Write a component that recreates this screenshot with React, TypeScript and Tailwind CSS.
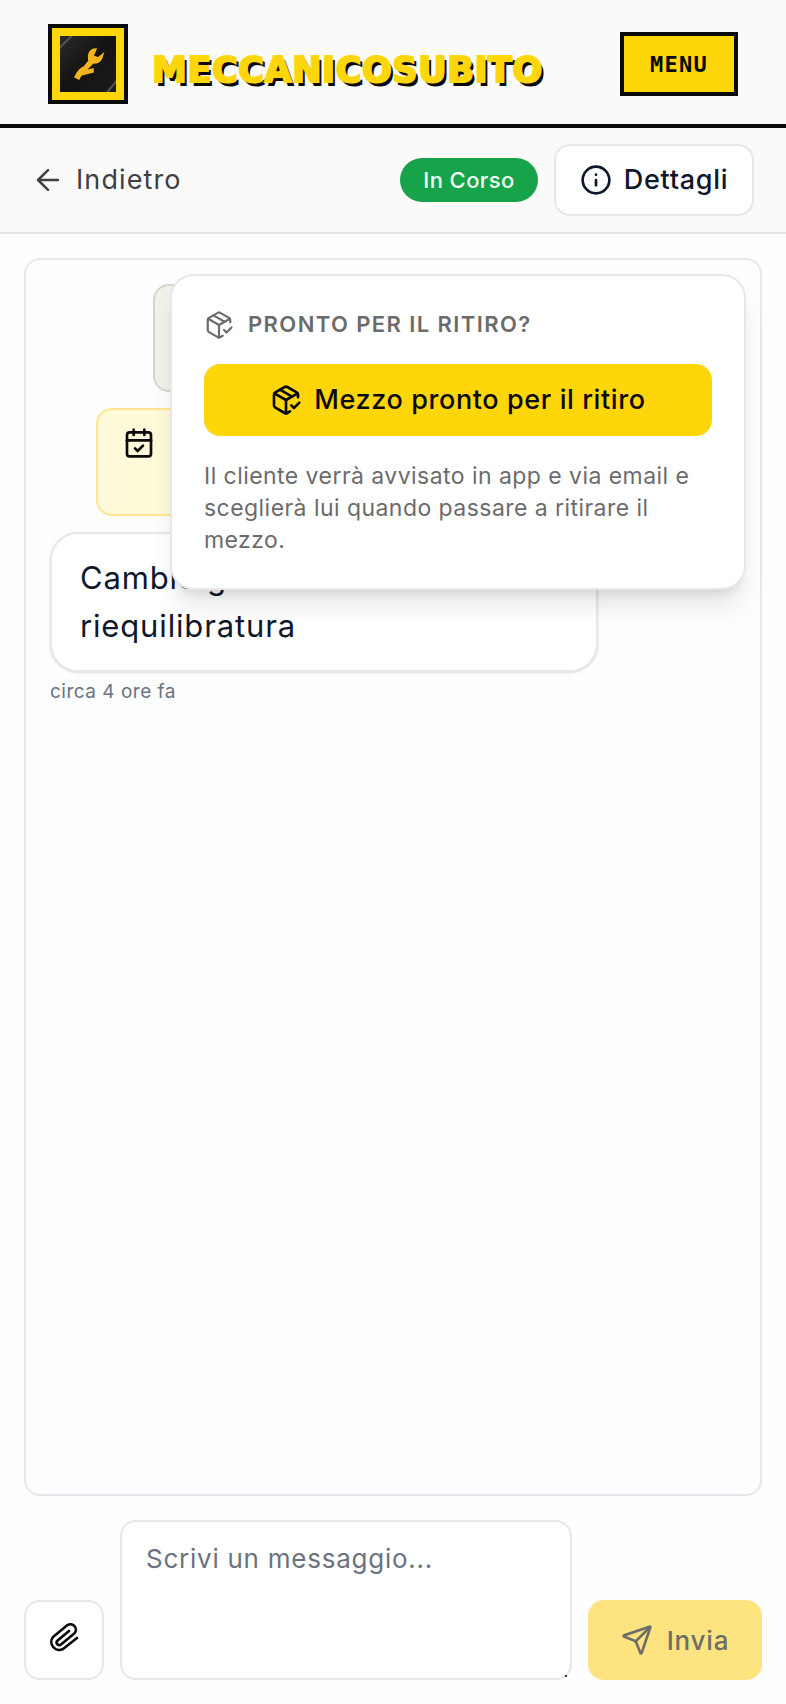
import { ArrowLeft, CalendarCheck, Info, PackageCheck, Send } from "lucide-react";

const Logo = () => {
    return (
        <div className="w-20 h-20 shrink-0 border-4 border-[#0a0a0a] bg-[#ffd60a] p-2">
            <svg viewBox="0 0 56 56" className="block w-14 h-14">
                <defs>
                    <linearGradient id="logoBg" x1="0" y1="0" x2="1" y2="1">
                        <stop offset="0" stopColor="#2b2a28" />
                        <stop offset="0.5" stopColor="#141312" />
                        <stop offset="1" stopColor="#1d1c1a" />
                    </linearGradient>
                </defs>
                <rect width="56" height="56" fill="url(#logoBg)" />
                <path d="M0 10 L10 0 L13 0 L0 13 Z" fill="#55534f" />
                <path d="M46 56 L56 44 L56 47 L49 56 Z" fill="#55534f" />
                <path
                    d="M33 20 L36 13 C33 13 30 15 29 18 C28 21 29 23 29 25 L24 31 C21 32 18 35 15 41 L19 43 L21 39 L33 36 L33 33 L25 35 L33 27 C37 27 41 25 42 21 L43 18 L38 22 Z"
                    fill="#f4b41a"
                    stroke="#f4b41a"
                    strokeWidth="1.5"
                />
            </svg>
        </div>
    );
};

// graffetta: quella di lucide qui viene troppo tonda
const Clip = () => {
    return (
        <svg viewBox="22 22 36 36" className="w-9 h-9" fill="none" stroke="currentColor" strokeWidth="2.6" strokeLinecap="round" strokeLinejoin="round">
            <path d="M53 38 L39 49 A8 8 0 0 1 29 37 L43.5 25 A5.5 5.5 0 0 1 50.5 33.3 L37 44.5 A2.6 2.6 0 0 1 33.6 40.5 L45 31" />
        </svg>
    );
};

export default function App() {
    return (
        <div className="flex flex-col h-[1704px] w-[786px] bg-white text-[#0f172a] font-['Inter','Noto_Sans',sans-serif]">
            <header className="h-[128px] shrink-0 flex items-center justify-between pt-1 pl-12 pr-12 bg-[#fafaf9] border-b-4 border-[#0a0a0a]">
                <div className="flex items-center gap-6">
                    <Logo />
                    <span className="mt-3 font-['DejaVu_Sans',sans-serif] font-bold text-[35px] leading-none tracking-[0.6px] text-[#ffd60a] [-webkit-text-stroke:2px_#ffd60a] [text-shadow:3px_4px_0_#0a0a0a]">
                        MECCANICOSUBITO
                    </span>
                </div>
                <button className="w-[118px] h-16 border-4 border-[#0a0a0a] bg-[#ffd60a] font-['DejaVu_Sans_Mono',monospace] font-bold text-[22px] tracking-[1.2px] text-[#0a0a0a]">
                    MENU
                </button>
            </header>

            <div className="h-[106px] shrink-0 flex items-center justify-between pl-[31px] pr-8 bg-[#fafaf9] border-b-2 border-[#e5e5e5]">
                <div className="flex items-center gap-[11px] text-[27px] tracking-[1.1px] text-[#3f3f46]">
                    <ArrowLeft size={34} strokeWidth={1.75} />
                    <span>Indietro</span>
                </div>
                <div className="flex items-center gap-4">
                    <span className="h-11 w-[138px] rounded-full bg-[#16a34a] flex items-center justify-center text-[22px] font-medium tracking-[0.4px] text-[#f0fdf4]">
                        In Corso
                    </span>
                    <button className="h-[72px] w-[200px] rounded-2xl border-2 border-[#e5e7eb] bg-white flex items-center justify-center gap-3 text-[27px] font-medium tracking-[0.7px]">
                        <Info size={32} strokeWidth={2} />
                        Dettagli
                    </button>
                </div>
            </div>

            <main className="flex-1 flex flex-col min-h-0 px-6 pt-6 pb-6 bg-[#fefefe]">
                <div className="relative flex-1 min-h-0 rounded-2xl border-2 border-[#e5e7eb] bg-[#fcfdfe] p-6">
                    <div className="flex flex-col items-center gap-4">
                        <div className="w-[480px] h-[108px] rounded-2xl border-2 border-[#d6d6d0] bg-[#f1f1ec]" />
                        <div className="w-[594px] h-[108px] rounded-2xl border-2 border-[#fde68a] bg-[#fef9d9] pt-[17px] pl-[25px]">
                            <CalendarCheck size={32} strokeWidth={2} className="text-[#0a0a0a]" />
                        </div>
                    </div>
                    <div className="mt-4 w-[548px] rounded-[28px] border-2 border-[#e5e7eb] bg-white px-7 py-5 text-[31px] leading-[48px] tracking-[0.85px] shadow-sm">
                        Cambio gomme e
                        <br />
                        riequilibratura
                    </div>
                    <p className="mt-1.5 text-[19px] tracking-[0.5px] text-[#6b7280]">circa 4 ore fa</p>

                    {/* popover sopra la chat */}
                    <div className="absolute left-[144px] top-[14px] w-[576px] h-[316px] rounded-3xl border-2 border-[#e5e7eb] bg-white px-8 pt-8 shadow-xl">
                        <div className="flex items-center gap-[14px] text-[#6b6b6b]">
                            <PackageCheck size={30} strokeWidth={1.75} />
                            <span className="text-[22px] font-semibold tracking-[1.4px]">PRONTO PER IL RITIRO?</span>
                        </div>
                        <button className="mt-[23px] w-full h-[72px] rounded-2xl bg-[#ffd60a] flex items-center justify-center gap-3 text-[27px] font-medium tracking-[0.6px] text-[#0a0a0a]">
                            <PackageCheck size={32} strokeWidth={2} />
                            Mezzo pronto per il ritiro
                        </button>
                        <p className="mt-6 text-[23px] leading-8 tracking-[0.45px] text-[#6b6b6b]">
                            Il cliente verrà avvisato in app e via email e sceglierà lui quando passare a ritirare il mezzo.
                        </p>
                    </div>
                </div>

                <div className="shrink-0 flex items-end gap-4 pt-6">
                    <button className="w-20 h-20 shrink-0 rounded-2xl border-2 border-[#e5e7eb] bg-white flex items-center justify-center text-[#0a0a0a]">
                        <Clip />
                    </button>
                    <div className="relative w-[452px] h-[160px] shrink-0">
                        <textarea
                            placeholder="Scrivi un messaggio..."
                            className="block w-full h-full resize-none rounded-2xl border-2 border-[#e5e7eb] bg-white px-6 pt-[17px] text-[26px] tracking-[0.75px] outline-none placeholder:text-[#6b7280]"
                        />
                        <span className="absolute right-[5px] bottom-[3px] w-0.5 h-0.5 bg-[#333333]" />
                    </div>
                    <button className="w-[174px] h-20 shrink-0 rounded-2xl bg-[#fde480] flex items-center justify-center gap-[14px] text-[26px] font-medium tracking-[0.8px] text-[#6e6e68]">
                        <Send size={32} strokeWidth={2} />
                        Invia
                    </button>
                </div>
            </main>
        </div>
    );
}
